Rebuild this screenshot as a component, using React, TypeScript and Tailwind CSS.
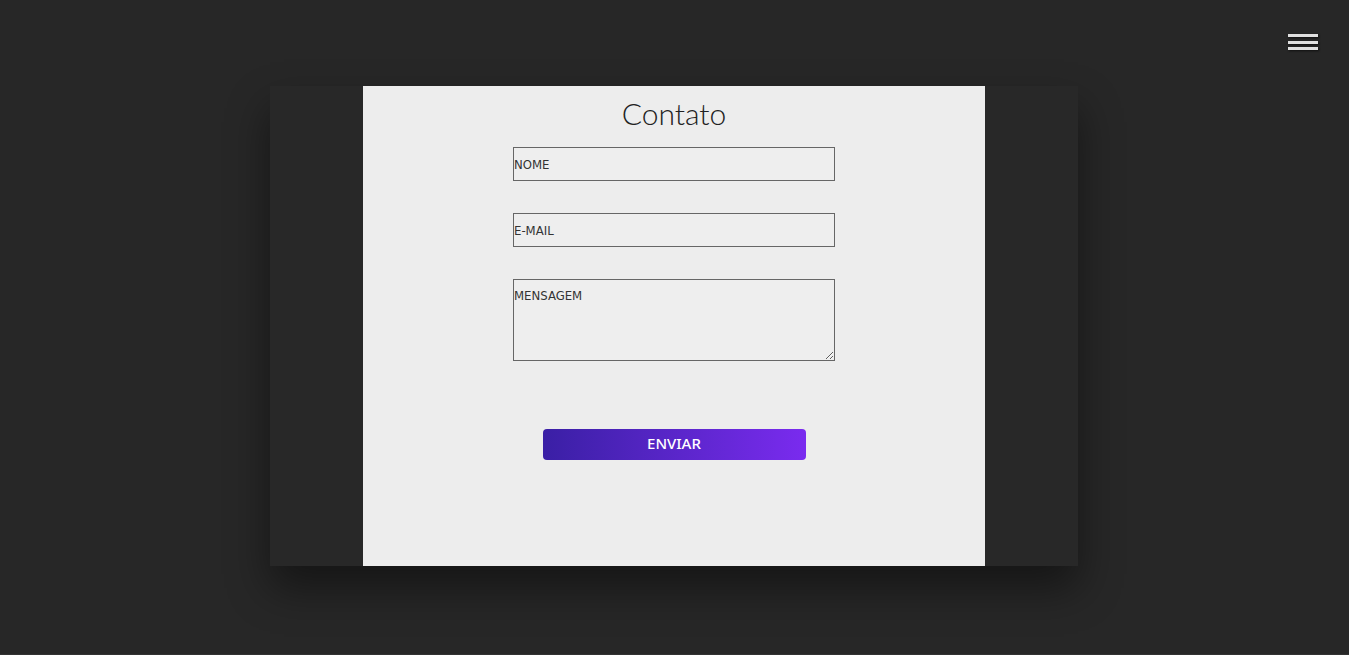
import React from "react";

const fieldClass =
  "w-[322px] h-[34px] border border-[#666] bg-[#eeeeee] px-0 text-[13px] tracking-[0px] text-[#222] placeholder:text-[#333] outline-none";

const labelFont = {
  fontFamily: '"Liberation Sans Narrow", "DejaVu Sans Condensed", sans-serif',
};

const App = () => {
  return (
    <div className="relative h-[655px] w-full overflow-hidden bg-[#272727] border-b border-[#333]">
      <button className="absolute right-[31px] top-[34px] flex flex-col gap-[3.5px] drop-shadow-[1px_1px_1px_rgba(0,0,0,0.6)]">
        <span className="block h-[3px] w-[30px] bg-[#e0e0e0]" />
        <span className="block h-[3px] w-[30px] bg-[#e0e0e0]" />
        <span className="block h-[3px] w-[30px] bg-[#e0e0e0]" />
      </button>

      <div className="flex justify-center pt-[86px] pr-px">
        <div className="flex h-[480px] w-[808px] justify-center bg-[#282828] shadow-[0_22px_40px_rgba(0,0,0,0.45)]">
          <div className="flex w-[622px] flex-col items-center bg-[#ededed]">
            <h1
              className="mt-[9px] text-[30px] font-light leading-[36px] text-[#222]"
              style={{ fontFamily: 'Lato, "Noto Sans", sans-serif' }}
            >
              Contato
            </h1>
            <form className="mt-[16px] flex flex-col items-center">
              <input
                type="text"
                placeholder="NOME"
                className={fieldClass}
                style={labelFont}
              />
              <input
                type="email"
                placeholder="E-MAIL"
                className={`${fieldClass} mt-[32px]`}
                style={labelFont}
              />
              <textarea
                placeholder="MENSAGEM"
                className="mt-[32px] h-[82px] w-[322px] border border-[#666] bg-[#eeeeee] px-0 pt-[8px] text-[13px] leading-[16px] tracking-[0px] text-[#222] placeholder:text-[#333] outline-none"
                style={labelFont}
              />
              <button
                type="button"
                className="mt-[68px] h-[31px] w-[263px] rounded-[4px] bg-gradient-to-r from-[#3a1fa5] to-[#7a2bef] pb-[3px] text-[15px] font-medium text-white"
                style={{ fontFamily: '"Noto Sans", "Open Sans", sans-serif' }}
              >
                ENVIAR
              </button>
            </form>
          </div>
        </div>
      </div>
    </div>
  );
};

export default App;
